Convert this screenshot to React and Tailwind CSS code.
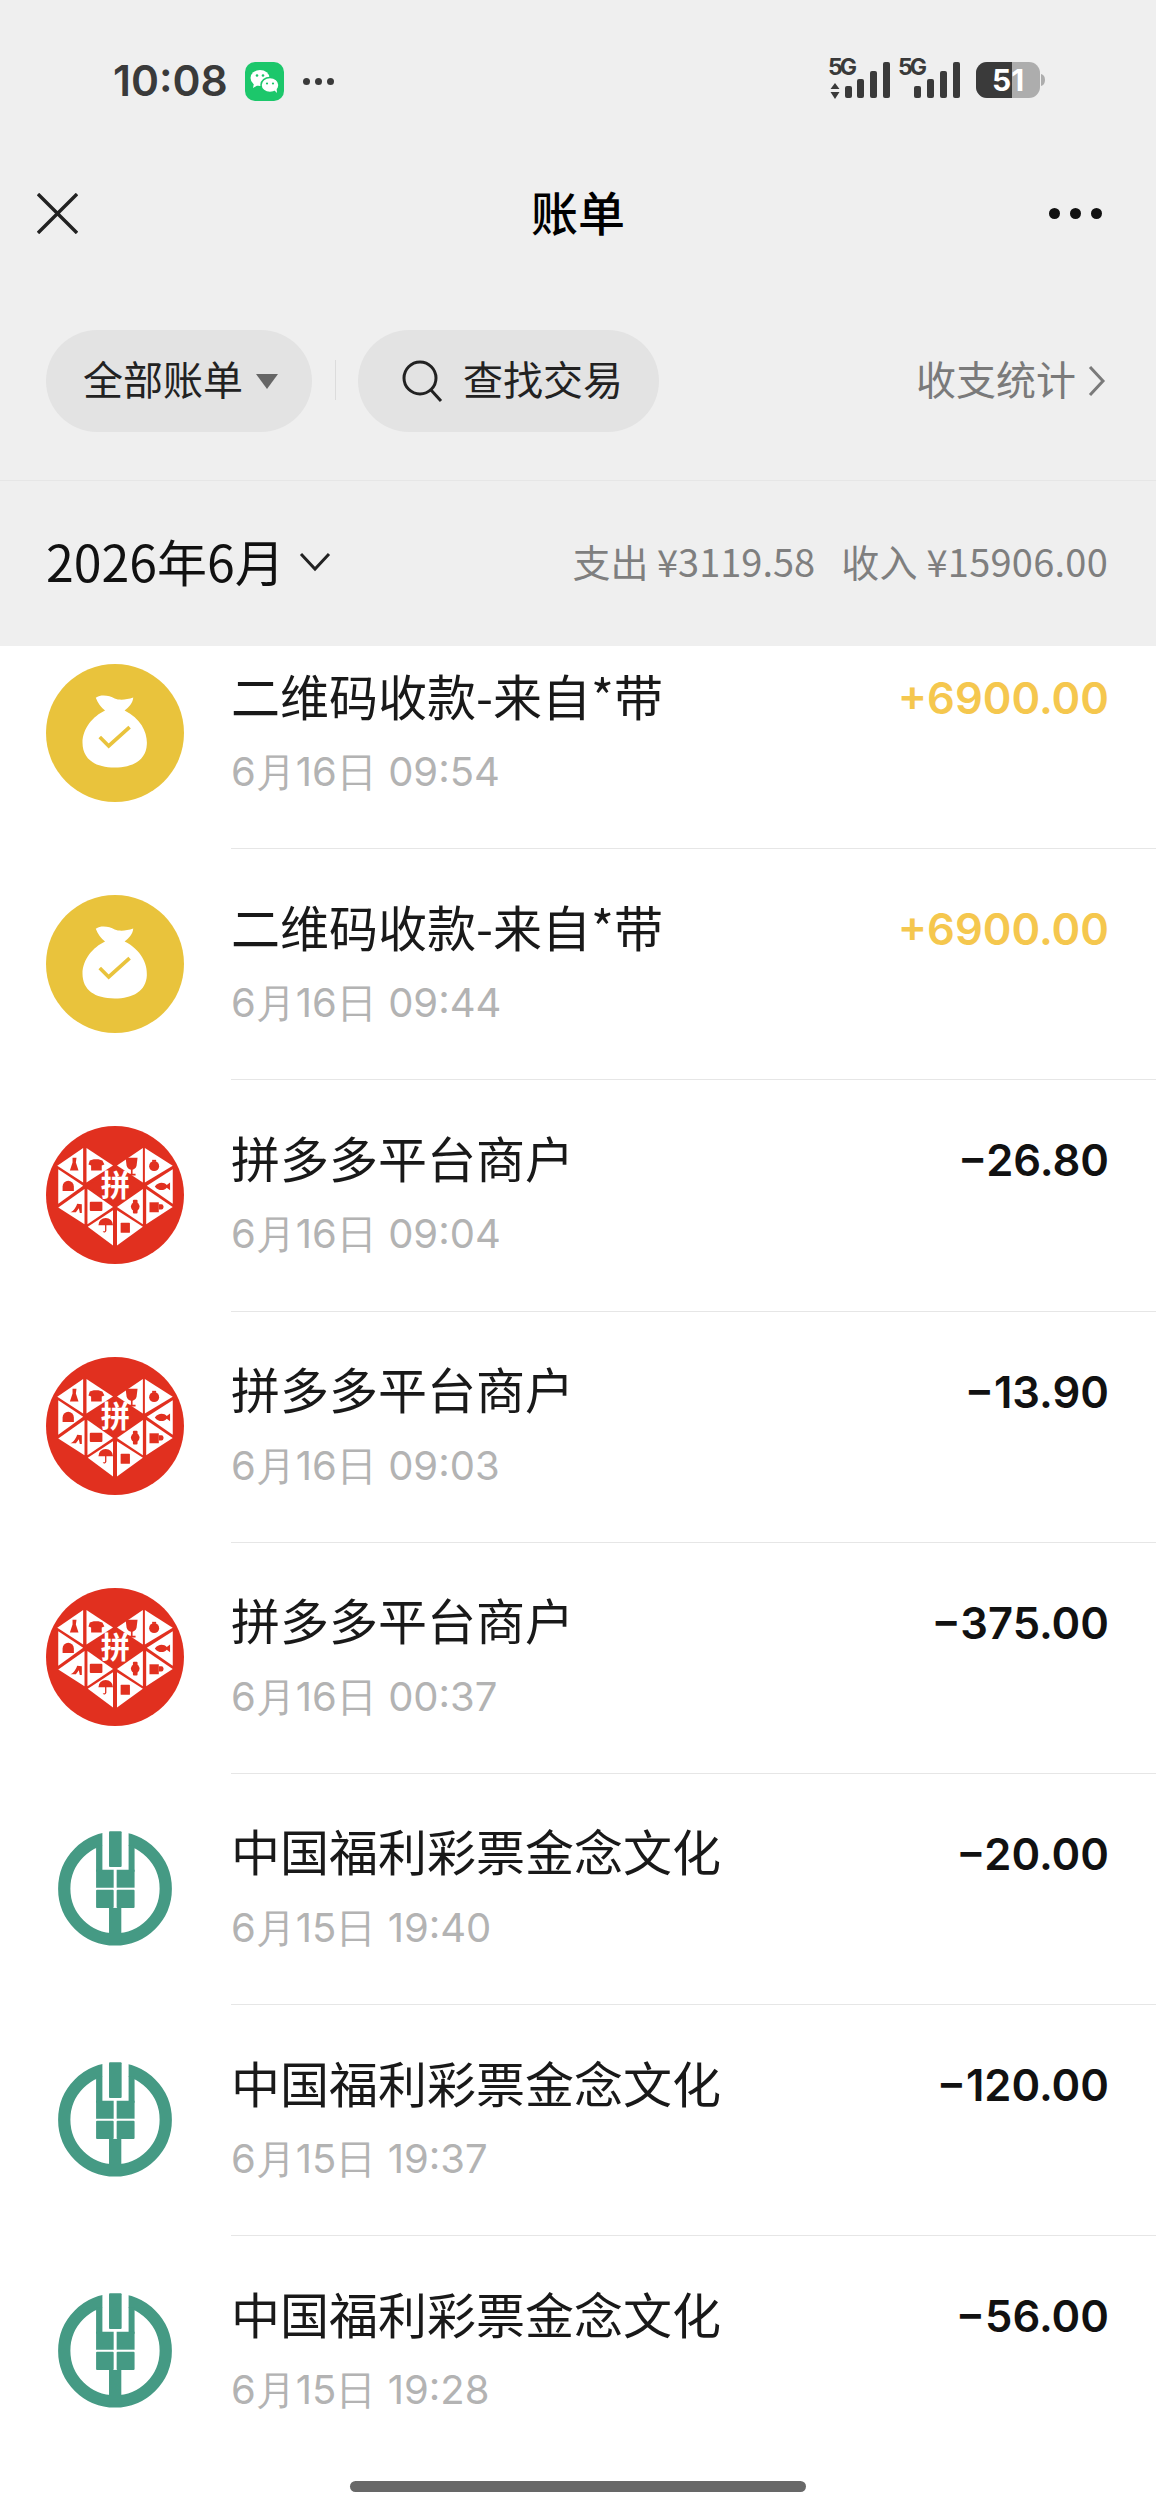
import React from 'react';

const FONT = '"Noto Sans CJK SC", sans-serif';

const bills = [
    { id: 1, icon: 'bag', title: '二维码收款-来自*带', time: '6月16日 09:54', amount: '+6900.00' },
    { id: 2, icon: 'bag', title: '二维码收款-来自*带', time: '6月16日 09:44', amount: '+6900.00' },
    { id: 3, icon: 'pdd', title: '拼多多平台商户', time: '6月16日 09:04', amount: '−26.80' },
    { id: 4, icon: 'pdd', title: '拼多多平台商户', time: '6月16日 09:03', amount: '−13.90' },
    { id: 5, icon: 'pdd', title: '拼多多平台商户', time: '6月16日 00:37', amount: '−375.00' },
    { id: 6, icon: 'abc', title: '中国福利彩票金念文化', time: '6月15日 19:40', amount: '−20.00' },
    { id: 7, icon: 'abc', title: '中国福利彩票金念文化', time: '6月15日 19:37', amount: '−120.00' },
    { id: 8, icon: 'abc', title: '中国福利彩票金念文化', time: '6月15日 19:28', amount: '−56.00' },
];

const WeChatIcon = () => (
    <svg width="39" height="39" viewBox="0 0 39 39">
        <rect width="39" height="39" rx="10" fill="#1cc76b" />
        <ellipse cx="15" cy="16" rx="9.5" ry="8" fill="#fff" />
        <path d="M9 21l-1 5 5-3z" fill="#fff" />
        <ellipse cx="25" cy="23" rx="9" ry="7.6" fill="#fff" stroke="#1cc76b" strokeWidth="1.5" />
        <path d="M29 28l3 3-.5-5z" fill="#fff" />
        <circle cx="12" cy="13.5" r="1.3" fill="#1cc76b" />
        <circle cx="18" cy="13.5" r="1.3" fill="#1cc76b" />
        <circle cx="22" cy="21.5" r="1.1" fill="#1cc76b" />
        <circle cx="28" cy="21.5" r="1.1" fill="#1cc76b" />
    </svg>
);

const SignalIcons = () => (
    <svg width="220" height="54" viewBox="825 54 220 54" fill="#3a3a3a">
        <text x="828" y="75.5" fontFamily="Inter, sans-serif" fontSize="23" fontWeight="700" textLength="29">5G</text>
        <path d="M835 84l4.5 6h-9zM835 100l4.5-7h-9z" />
        <rect x="845" y="87" width="7" height="12" rx="2" />
        <rect x="857" y="80" width="7" height="19" rx="2" />
        <rect x="870" y="72" width="7" height="27" rx="2" />
        <rect x="883" y="63" width="7" height="36" rx="2" />
        <text x="898" y="75.5" fontFamily="Inter, sans-serif" fontSize="23" fontWeight="700" textLength="29">5G</text>
        <rect x="914" y="87" width="7" height="12" rx="2" />
        <rect x="927" y="80" width="7" height="19" rx="2" />
        <rect x="940" y="72" width="7" height="27" rx="2" />
        <rect x="953" y="63" width="7" height="36" rx="2" />
        <rect x="976" y="63" width="64" height="36" rx="11" fill="#adadad" />
        <path d="M1041 75q4 1 4 6t-4 6z" fill="#adadad" />
        <path d="M987 63h25v36h-25a11 11 0 0 1-11-11v-14a11 11 0 0 1 11-11z" />
        <text x="992" y="92" fontFamily="Inter, sans-serif" fontSize="30" fontWeight="700" fill="#fff">51</text>
    </svg>
);

// yellow money bag
const BagIcon = () => (
    <svg width="138" height="138" viewBox="48 38 416 416">
        <circle cx="256" cy="246" r="208" fill="#e9c33c" />
        <path d="M198 140C215 128 240 134 255 142C270 148 290 146 311 139C310 155 297 170 285 178C335 203 354 245 352 280C350 328 310 350 255 350C195 350 158 325 158 275C158 232 190 195 226 178C214 170 204 155 198 140Z" fill="#fff" />
        <path d="M210 258L237 285L300 228" fill="none" stroke="#e9c33c" strokeWidth="11" />
    </svg>
);

const pddTriangles = [
    '82,166 160,112 160,216',
    '170,112 250,165 170,216',
    '85,176 160,226 85,280',
    '85,292 164,236 164,342',
    '173,236 250,290 173,342',
    '174,350 250,300 250,406',
    '262,300 340,350 262,406',
    '262,290 340,236 340,342',
    '350,236 430,290 350,342',
    '430,176 352,226 430,280',
    '346,112 430,166 346,216',
    '340,112 262,165 340,216',
];

// heart made of triangles, small goods inside each one
const PddIcon = () => (
    <svg width="138" height="138" viewBox="48 46 416 416">
        <circle cx="256" cy="254" r="208" fill="#e1301f" />
        {pddTriangles.map((points) => (
            <polygon key={points} points={points} fill="#fff" />
        ))}
        <g fill="#e1301f">
            <path d="M128 142h12l-2 14 8 24h-26l8-24z" />
            <path d="M180 150l12-4h14l12 4 6 12-8 3v15h-32v-15l-8-3z" />
            <path d="M98 228a17 17 0 0 1 34 0v14h-34z" />
            <path d="M118 306c10 0 18-10 24-26l14 2v26h-6l-3-14-9 12z" />
            <rect x="180" y="274" width="38" height="28" rx="3" />
            <path d="M206 345a22 22 0 0 1 44 0h-20v17a6 6 0 0 1-11 2l4-1a2 2 0 0 0 3-1v-17z" />
            <rect x="273" y="338" width="28" height="30" rx="2" />
            <circle cx="317" cy="289" r="13" />
            <rect x="310" y="268" width="14" height="42" rx="3" />
            <path d="M360 276h28v30h-28z" />
            <path d="M388 282h8a6 6 0 0 1 6 6v4a6 6 0 0 1-6 6h-8z" />
            <path d="M376 228c10-14 28-14 36-4l10-8v24l-10-8c-8 10-26 10-36-4z" />
            <circle cx="374" cy="167" r="15" />
            <path d="M368 148h12v6h-12z" />
            <path d="M288 142h36l-3 24c-2 8-8 11-12 12v12h9v5h-23v-5h9v-12c-6-1-11-5-13-12z" />
        </g>
        <polygon points="255,174 340,226 255,284 172,226" fill="#e1301f" />
        <text x="257" y="258" textAnchor="middle" fontFamily={FONT} fontSize="88" fontWeight="700" fill="#fff">拼</text>
    </svg>
);

// agricultural bank logo
const AbcIcon = () => (
    <svg width="138" height="138" viewBox="48 28 416 416">
        <circle cx="256" cy="235" r="153" fill="none" stroke="#459a84" strokeWidth="37" />
        <rect x="218" y="50" width="79" height="130" fill="#fff" />
        <g fill="#459a84">
            <rect x="238" y="62" width="38" height="108" rx="3" />
            <rect x="199" y="104" width="19" height="80" />
            <rect x="297" y="104" width="18" height="80" />
            <path d="M199 178h19c0 0 4 0 34 0v54h-53z" />
            <rect x="261" y="178" width="54" height="54" />
            <rect x="199" y="238" width="53" height="55" rx="3" />
            <rect x="261" y="238" width="54" height="55" rx="3" />
            <rect x="238" y="293" width="37" height="100" />
        </g>
    </svg>
);

const billIcons = { bag: BagIcon, pdd: PddIcon, abc: AbcIcon };

const BillRow = ({ bill, last }) => {
    const Icon = billIcons[bill.icon];
    const positive = bill.amount.startsWith('+');

    return (
        <div className="flex h-[231.2px] items-center pl-[46px]">
            <span className="mb-[2px] flex"><Icon /></span>
            <div className={`ml-[47px] flex h-full flex-1 flex-col pr-[47px] pt-[50px] ${last ? '' : 'border-b border-[#e6e6e6]'}`}>
                <div className="flex items-center justify-between">
                    <span className="-mt-[7px] text-[49px] leading-[60px] text-[#191919]">{bill.title}</span>
                    <span className={`font-['Inter'] text-[43.5px] leading-[60px] font-semibold ${positive ? 'text-[#f5c74e]' : 'text-[#111111]'}`}>
                        {bill.amount}
                    </span>
                </div>
                <span className="mt-[14px] font-['Inter'] text-[40px] leading-[60px] text-[#b3b3b3]">{bill.time}</span>
            </div>
        </div>
    );
};

const App = () => {
    return (
        <div className="relative h-[2510px] w-[1156px] overflow-hidden bg-white" style={{ fontFamily: FONT }}>
            <header className="bg-[#efefef]">
                <div className="flex h-[160px] items-center justify-between pl-[113px] pr-[111px]">
                    <div className="mt-[2px] flex items-center">
                        <span className="font-['Inter'] text-[42.5px] leading-none font-semibold text-[#3a3a3a]">10:08</span>
                        <span className="ml-[17px] flex"><WeChatIcon /></span>
                        <span className="ml-[19px] flex gap-[5px]">
                            <i className="h-[7px] w-[7px] rounded-full bg-[#3a3a3a]" />
                            <i className="h-[7px] w-[7px] rounded-full bg-[#3a3a3a]" />
                            <i className="h-[7px] w-[7px] rounded-full bg-[#3a3a3a]" />
                        </span>
                    </div>
                    <SignalIcons />
                </div>

                <div className="grid h-[106px] grid-cols-[1fr_auto_1fr] items-center px-[54px]">
                    <svg className="-ml-[17px]" width="41" height="41" viewBox="0 0 41 41" fill="none" stroke="#222" strokeWidth="3.4">
                        <path d="M1 1l39 39M40 1L1 40" />
                    </svg>
                    <span className="pb-[6px] text-[47px] leading-none font-medium text-black">账单</span>
                    <span className="flex justify-end gap-[10px]">
                        <i className="h-[11px] w-[11px] rounded-full bg-[#111]" />
                        <i className="h-[11px] w-[11px] rounded-full bg-[#111]" />
                        <i className="h-[11px] w-[11px] rounded-full bg-[#111]" />
                    </span>
                </div>

                <div className="flex h-[215px] items-start border-b border-[#e6e6e6] pl-[46px] pr-[50px] pt-[64px]">
                    <button className="flex h-[102px] w-[266px] items-center rounded-full bg-[#e3e3e3] pl-[37px] text-[40px] text-[#222]">
                        <span className="pb-[6px]">全部账单</span>
                        <span className="ml-[13px] h-0 w-0 border-x-[11px] border-t-[15px] border-x-transparent border-t-[#666]" />
                    </button>
                    <span className="ml-[23px] mt-[30px] h-[40px] w-px bg-[#dcdcdc]" />
                    <button className="ml-[22px] flex h-[102px] w-[301px] items-center rounded-full bg-[#e3e3e3] pl-[44px] text-[40px] text-[#222]">
                        <svg width="42" height="42" viewBox="0 0 42 42" fill="none" stroke="#222" strokeWidth="3">
                            <circle cx="18" cy="18" r="16" />
                            <path d="M29 30l10 11" />
                        </svg>
                        <span className="ml-[19px] pb-[6px]">查找交易</span>
                    </button>
                    <button className="ml-auto flex h-[102px] items-center text-[40px] text-[#7a7a7a]">
                        <span className="pb-[6px]">收支统计</span>
                        <svg className="ml-[12px]" width="18" height="32" viewBox="0 0 18 32" fill="none" stroke="#7a7a7a" strokeWidth="3">
                            <path d="M2 2l13 14L2 30" />
                        </svg>
                    </button>
                </div>

                <div className="flex h-[165px] items-center justify-between pl-[46px] pr-[48px]">
                    <div className="flex items-center text-[#111]">
                        <span className="pb-[8px] text-[50px] leading-[60px]">2026年6月</span>
                        <svg className="ml-[14px] mb-[4px]" width="32" height="20" viewBox="0 0 32 20" fill="none" stroke="#222" strokeWidth="3">
                            <path d="M2 2l14 15L30 2" />
                        </svg>
                    </div>
                    <div className="flex gap-[26px] pb-[6px] text-[38px] text-[#7f7f7f]">
                        <span>支出 ¥3119.58</span>
                        <span className="tracking-[0.25px]">收入 ¥15906.00</span>
                    </div>
                </div>
            </header>

            <div className="overflow-hidden">
                <div className="-mt-[28px]">
                    {bills.map((bill, index) => (
                        <BillRow key={bill.id} bill={bill} last={index === bills.length - 1} />
                    ))}
                </div>
            </div>

            <div className="mx-auto mt-[13px] h-[11px] w-[456px] rounded-full bg-[#686868]" />
        </div>
    );
};

export default App;
